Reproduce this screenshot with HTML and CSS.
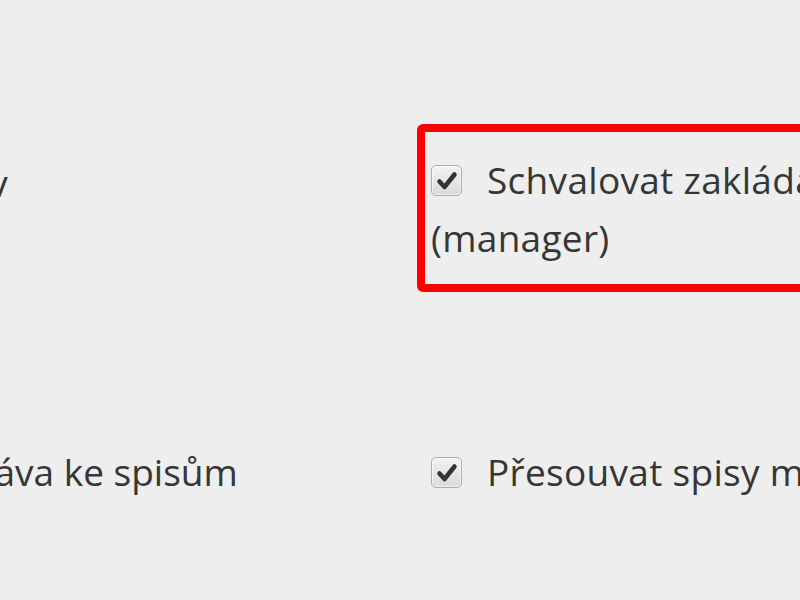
FILE: index.html
```html
<!DOCTYPE html>
<html lang="cs">
<head>
<meta charset="utf-8">
<title>Oprávnění</title>
<link rel="stylesheet" href="styles.css">
</head>
<body>
<div class="form">
  <div class="row">
    <div class="label label-first">Spisový archiv</div>
    <div class="field field-highlight">
      <span class="check"><svg viewBox="0 0 30 30" width="30" height="30"><path d="M7.5 15.5 L12.5 21 L22.5 8.5" fill="none" stroke="#333" stroke-width="4.5" stroke-linecap="round" stroke-linejoin="round"/></svg></span>Schvalovat zakládání spisů (manager)
    </div>
  </div>
  <div class="row">
    <div class="label">Přístupová práva ke spisům</div>
    <div class="field">
      <span class="check"><svg viewBox="0 0 30 30" width="30" height="30"><path d="M7.5 15.5 L12.5 21 L22.5 8.5" fill="none" stroke="#333" stroke-width="4.5" stroke-linecap="round" stroke-linejoin="round"/></svg></span>Přesouvat spisy mezi odděleními
    </div>
  </div>
</div>
</body>
</html>
```

FILE: styles.css
```css
html, body {
  margin: 0;
  padding: 0;
  background: #eeeeee;
  overflow: hidden;
}

body {
  width: 800px;
  height: 600px;
  font-family: "Open Sans", "Liberation Sans", sans-serif;
  font-size: 37px;
  line-height: 58px;
  color: #363636;
}

.form {
  display: flex;
  flex-direction: column;
  gap: 124px;
  padding-top: 124px;
  margin-left: -237px;
  width: 1500px;
}

.row {
  display: flex;
  align-items: flex-start;
}

.label {
  width: 654px;
  flex: none;
  padding-top: 27px;
  white-space: nowrap;
}

.label-first {
  padding-top: 30px;
  text-indent: 2px;
}

.field {
  width: 650px;
  flex: none;
  border: 8px solid transparent;
  border-radius: 6px;
  padding: 19px 6px 17px 6px;
  letter-spacing: 0.3px;
}

.field-highlight {
  border-color: #ff0000;
}

.check {
  display: inline-block;
  width: 31px;
  height: 31px;
  margin-right: 25px;
  vertical-align: -2px;
  box-sizing: border-box;
  border: 1px solid #acacac;
  border-radius: 5px;
  background: linear-gradient(#f2f2f2, #dadada);
  box-shadow: inset 0 0 0 1px rgba(255,255,255,0.6);
  position: relative;
}

.check svg {
  position: absolute;
  left: 0;
  top: 0;
}
```
